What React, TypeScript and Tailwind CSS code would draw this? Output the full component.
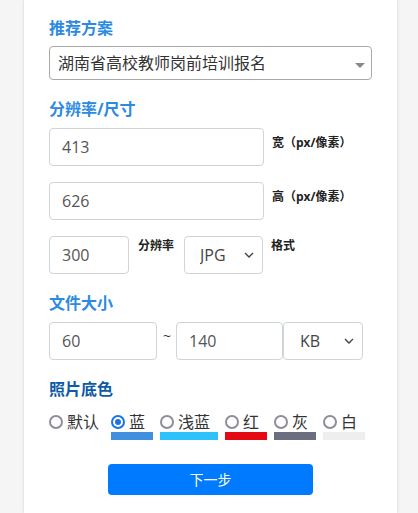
import { useState } from "react";

const font = { fontFamily: '"Open Sans", "Noto Sans CJK SC", sans-serif' };

function Chevron() {
  return (
    <svg width="10" height="6" viewBox="0 0 10 6" className="pointer-events-none absolute right-[9px] top-1/2 -translate-y-1/2">
      <path d="M1 1l4 4 4-4" fill="none" stroke="#444" strokeWidth="1.4" />
    </svg>
  );
}

function Field({ value, className }: { value: string; className: string }) {
  return (
    <input
      defaultValue={value}
      className={`h-[38px] rounded-[4px] border border-[#ced4da] bg-white px-[12px] text-[16px] text-[#555] outline-none ${className}`}
    />
  );
}

function Pick({ options, className, pad }: { options: string[]; className: string; pad: string }) {
  return (
    <div className={`relative h-[38px] ${className}`}>
      <select className={`h-full w-full appearance-none rounded-[4px] border border-[#ced4da] bg-white ${pad} text-[16px] text-[#444] outline-none`}>
        {options.map((o) => (
          <option key={o}>{o}</option>
        ))}
      </select>
      <Chevron />
    </div>
  );
}

const colors = [
  { name: "默认", w: "w-[55px]", bar: "" },
  { name: "蓝", w: "w-[42px]", bar: "bg-[#418fde]" },
  { name: "浅蓝", w: "w-[58px]", bar: "bg-[#2ec2fc]" },
  { name: "红", w: "w-[42px]", bar: "bg-[#e50914]" },
  { name: "灰", w: "w-[42px]", bar: "bg-[#6b6e7e]" },
  { name: "白", w: "w-[42px]", bar: "bg-[#eeeeee]" },
];

export default function App() {
  const [bg, setBg] = useState("蓝");

  return (
    <div className="min-h-[513px] bg-[#f5f5f5]" style={font}>
      <div className="ml-[24px] min-h-[513px] w-[373px] bg-white px-[25px] pt-[16px] shadow-[0_0_3px_rgba(0,0,0,0.15)]">
        {/* 推荐方案 */}
        <h2 className="text-[16px] font-bold leading-[24px] text-[#2b8ae2]">推荐方案</h2>
        <div className="relative mt-[6px] h-[34px] w-[323px]">
          <select className="h-full w-full appearance-none rounded-[4px] border border-[#aaaaaa] bg-white pl-[8px] text-[16px] text-[#333] outline-none">
            <option>湖南省高校教师岗前培训报名</option>
          </select>
          <svg width="10" height="5" viewBox="0 0 10 5" className="pointer-events-none absolute right-[7px] top-[17px]">
            <path d="M0 0h10L5 5z" fill="#888" />
          </svg>
        </div>

        {/* 分辨率/尺寸 */}
        <h2 className="mt-[17px] text-[16px] font-bold leading-[24px] text-[#2b8ae2]">分辨率/尺寸</h2>
        <div className="mt-[7px] flex items-start gap-[8px]">
          <Field value="413" className="w-[215px]" />
          <span className="mt-[6px] text-[12px] font-bold leading-[18px] text-[#222]">宽（px/像素）</span>
        </div>
        <div className="mt-[16px] flex items-start gap-[8px]">
          <Field value="626" className="w-[215px]" />
          <span className="mt-[6px] text-[12px] font-bold leading-[18px] text-[#222]">高（px/像素）</span>
        </div>
        <div className="mt-[16px] flex items-start">
          <Field value="300" className="w-[80px]" />
          <span className="ml-[9px] mt-[1px] text-[12px] font-bold leading-[18px] text-[#222]">分辨率</span>
          <Pick options={["JPG", "PNG"]} className="ml-[10px] w-[79px]" pad="pl-[15px]" />
          <span className="ml-[8px] mt-[1px] text-[12px] font-bold leading-[18px] text-[#222]">格式</span>
        </div>

        {/* 文件大小 */}
        <h2 className="mt-[17px] text-[16px] font-bold leading-[24px] text-[#2b8ae2]">文件大小</h2>
        <div className="mt-[7px] flex items-start">
          <Field value="60" className="w-[108px]" />
          <span className="mt-[4px] w-[19px] pl-[6px] text-[14px] leading-[20px] text-[#333]">~</span>
          <Field value="140" className="w-[107px]" />
          <Pick options={["KB", "MB"]} className="w-[80px]" pad="pl-[16px]" />
        </div>

        {/* 照片底色 */}
        <h2 className="mt-[17px] text-[16px] font-bold leading-[24px] text-[#0d5aa7]">照片底色</h2>
        <div className="mt-[12px] flex gap-[7px]">
          {colors.map((c) => (
            <label key={c.name} className={`flex cursor-pointer flex-col ${c.w}`} onClick={() => setBg(c.name)}>
              <span className="flex h-[18px] items-center gap-[4px] text-[16px] leading-[18px] text-[#333]">
                {bg === c.name ? (
                  <span className="flex h-[14px] w-[14px] shrink-0 items-center justify-center rounded-full border-2 border-[#1a73e8]">
                    <span className="h-[6px] w-[6px] rounded-full bg-[#1a73e8]" />
                  </span>
                ) : (
                  <span className="h-[14px] w-[14px] shrink-0 rounded-full border-2 border-[#8e8e99]" />
                )}
                {c.name}
              </span>
              <span className={`mt-[1px] h-[8px] w-full ${c.bar}`} />
            </label>
          ))}
        </div>

        <div className="mt-[24px] flex justify-center">
          <button className="h-[31px] w-[205px] rounded-[4px] bg-[#007bff] text-[14px] text-white">下一步</button>
        </div>
      </div>
    </div>
  );
}
